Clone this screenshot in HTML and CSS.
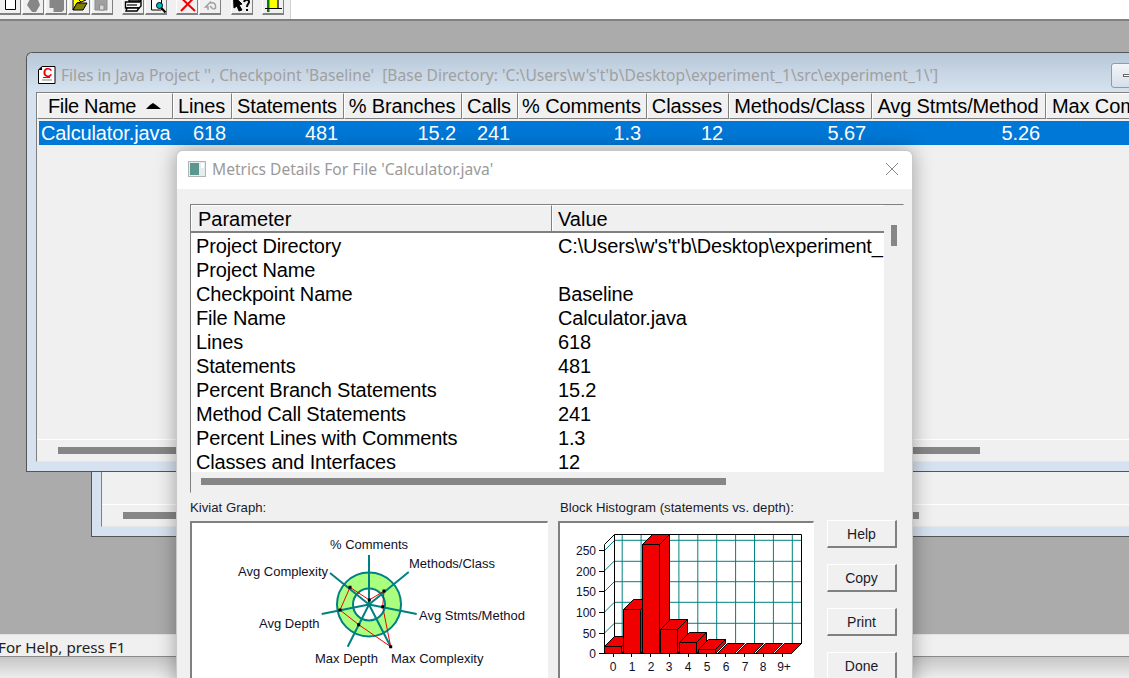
FILE: index.html
```html
<!DOCTYPE html>
<html lang="en">
<head>
<meta charset="utf-8">
<title>SourceMonitor</title>
<link rel="stylesheet" href="styles.css">
</head>
<body>
<div class="app">
  <header class="topbar">
    <div class="toolbar">
      <div class="tbgroup">
        <button class="tb tb-first"><svg class="ico" viewBox="0 0 22 22"><path class="i-doc" d="M6.500 0.500h7l3 3v13h-10z"/></svg></button>
        <button class="tb"><svg class="ico" viewBox="0 0 22 22"><path class="i-dis" d="M5 12L9 4h6l3 8-4 7h-4z"/></svg></button>
        <button class="tb"><svg class="ico" viewBox="0 0 22 22"><path class="i-dis" d="M4.500 0H17l2 3v14l-2 2H8.500v-4h-4z"/></svg></button>
        <button class="tb"><svg class="ico" viewBox="0 0 22 22"><path class="i-folder" d="M5 17V6h5l3 3-4 1z"/><path class="i-folder" d="M11 7l5-3 2 3-5 2z"/><path class="i-folder2" d="M5 17l4-7h10l-4 7z"/></svg></button>
        <button class="tb"><svg class="ico" viewBox="0 0 22 22"><path class="i-save" d="M4 2h12v15H4z"/><path class="i-savein" d="M8.500 12h4.500v5H8.500z"/></svg></button>
      </div>
      <div class="tbgroup">
        <button class="tb"><svg class="ico" viewBox="0 0 22 22"><path class="i-print" d="M7 3h10v5H7z"/><path class="i-print" d="M3.500 9h14l1.500-2v6l-2 2H3.500z"/><path class="i-bk" d="M5 12h10"/><path class="i-print" d="M5 15h12l-2 3H4z"/></svg></button>
        <button class="tb"><svg class="ico" viewBox="0 0 22 22"><path class="i-doc" d="M6.500 1.500h10v15.500h-10z"/><circle class="i-lens" cx="14.500" cy="12.500" r="3"/><path class="i-hd" d="M16.500 15l4 4.500"/></svg></button>
      </div>
      <div class="tbgroup">
        <button class="tb"><svg class="ico" viewBox="0 0 22 22"><path class="i-x" d="M5 18L17.700 5M19 18L5.300 5"/></svg></button>
        <button class="tb"><svg class="ico" viewBox="0 0 22 22"><path class="i-undo" d="M9 17v-3H6.500l5-5 1 1a3 3 0 0 1 4 3v2l-2 1.500M11 13l3 3"/></svg></button>
      </div>
      <div class="tbgroup tbgroup-wide">
        <button class="tb"><svg class="ico" viewBox="0 0 22 22"><path class="i-cur" d="M2.500 3L11 11l-3 1 3 5-3 1-2-5-3 2z"/><path class="i-q" d="M13 9c1-3 5-3 5 0 0 2-2 2-2 5M16 16v2"/></svg></button>
      </div>
      <div class="tbgroup">
        <button class="tb"><svg class="ico" viewBox="0 0 22 22"><path class="i-door" d="M8 2h7.500v13H8z"/><path class="i-green" d="M5 2h2.500v17H5z"/><path class="i-bk" d="M3 15.500h17M16 2v13"/></svg></button>
      </div>
    </div>
    <div class="topfill"></div>
  </header>

  <main class="desktop">
    <section class="mdi mdi-back">
      <div class="mdi-inner">
        <div class="mdi-scrollzone"><div class="hthumb hthumb-back"></div></div>
      </div>
    </section>

    <section class="mdi mdi-front">
      <div class="mdi-title">
        <svg class="cicon" viewBox="0 0 20 20"><path class="c-page" d="M5 1.500h13v17H1.500V5z"/><path class="c-corner" d="M1.500 5L5 1.500V5z"/><text class="c-letter" x="6" y="12">C</text><path class="c-red" d="M6 12.500h7"/><path class="c-line" d="M5 15h10"/></svg>
        <span class="mdi-caption">Files in Java Project '', Checkpoint 'Baseline'&nbsp; [Base Directory: 'C:\Users\w's't'b\Desktop\experiment_1\src\experiment_1\']</span>
        <div class="minbtn"><span class="mindash"></span></div>
      </div>
      <div class="mdi-inner">
        <div class="cols head">
          <div class="hc hc-name">File Name <svg class="sortup" viewBox="0 0 15 6"><path d="M0 6 L4 2 L7 0 L10 2 L15 6z"/></svg></div>
          <div class="hc">Lines</div>
          <div class="hc">Statements</div>
          <div class="hc">% Branches</div>
          <div class="hc">Calls</div>
          <div class="hc">% Comments</div>
          <div class="hc">Classes</div>
          <div class="hc">Methods/Class</div>
          <div class="hc">Avg Stmts/Method</div>
          <div class="hc hc-last">Max Com</div>
        </div>
        <div class="cols selrow">
          <div class="rc rc-name">Calculator.java</div>
          <div class="rc">618</div>
          <div class="rc">481</div>
          <div class="rc">15.2</div>
          <div class="rc rc-calls">241</div>
          <div class="rc">1.3</div>
          <div class="rc">12</div>
          <div class="rc">5.67</div>
          <div class="rc">5.26</div>
          <div class="rc"></div>
        </div>
        <div class="mdi-empty"></div>
        <div class="mdi-scrollzone"><div class="hthumb hthumb-front"></div></div>
      </div>
    </section>

    <section class="dialog">
      <div class="dlg-title">
        <svg class="dlg-icon" viewBox="0 0 18 16"><rect class="d-frame" x="0.500" y="0.500" width="17" height="15"/><rect class="d-teal" x="2" y="2" width="9" height="12"/><rect class="d-side" x="13" y="2" width="3" height="5"/></svg>
        <span class="dlg-caption">Metrics Details For File 'Calculator.java'</span>
        <svg class="dlg-close" viewBox="0 0 14 14"><path d="M1 1l12 12M13 1L1 13"/></svg>
      </div>
      <div class="dlg-body">
        <div class="listbox">
          <div class="listmain">
            <div class="lhead">
              <div class="lh lh-1">Parameter</div>
              <div class="lh lh-2">Value</div>
            </div>
            <div class="lrows">
              <div class="lrow"><span class="lk">Project Directory</span><span class="lv">C:\Users\w's't'b\Desktop\experiment_</span></div>
              <div class="lrow"><span class="lk">Project Name</span><span class="lv"></span></div>
              <div class="lrow"><span class="lk">Checkpoint Name</span><span class="lv">Baseline</span></div>
              <div class="lrow"><span class="lk">File Name</span><span class="lv">Calculator.java</span></div>
              <div class="lrow"><span class="lk">Lines</span><span class="lv">618</span></div>
              <div class="lrow"><span class="lk">Statements</span><span class="lv">481</span></div>
              <div class="lrow"><span class="lk">Percent Branch Statements</span><span class="lv">15.2</span></div>
              <div class="lrow"><span class="lk">Method Call Statements</span><span class="lv">241</span></div>
              <div class="lrow"><span class="lk">Percent Lines with Comments</span><span class="lv">1.3</span></div>
              <div class="lrow"><span class="lk">Classes and Interfaces</span><span class="lv">12</span></div>
            </div>
          </div>
          <div class="vscroll"><div class="vthumb"></div></div>
          <div class="lscroll"><div class="lthumb"></div></div>
        </div>

        <div class="lower">
          <div class="panel panel-kiviat">
            <div class="plabel">Kiviat Graph:</div>
            <div class="pbox pbox-k">
              <svg class="chart" viewBox="192 523 356 157">
                <circle class="k-band" cx="369" cy="604.500" r="24"/>
                <circle class="k-ring" cx="369" cy="604.500" r="32"/>
                <circle class="k-ring k-inner" cx="369" cy="604.500" r="16"/>
                <path class="k-spoke" d="M369 604.500V555M369 604.500L408.700 572M369 604.500L416.700 614M369 604.500L390.700 646.700M369 604.500L347.700 646.700M369 604.500L321.700 614M369 604.500L330 573"/>
                <path class="k-poly" d="M369.300 600L384 591L382.700 606.700L390.700 646.700L358.700 624.700L340 610L350 587.300z"/>
                <path class="k-dots" d="M369.300 600h.01M384 591h.01M382.700 606.700h.01M390.700 646.700h.01M358.700 624.700h.01M340 610h.01M350 587.300h.01"/>
                <text class="t13" x="330" y="549">% Comments</text>
                <text class="t13" x="409" y="568">Methods/Class</text>
                <text class="t13" x="419" y="620">Avg Stmts/Method</text>
                <text class="t13" x="391" y="663">Max Complexity</text>
                <text class="t13" x="315" y="663">Max Depth</text>
                <text class="t13" x="259" y="628">Avg Depth</text>
                <text class="t13" x="238" y="576">Avg Complexity</text>
              </svg>
            </div>
          </div>
          <div class="panel panel-hist">
            <div class="plabel">Block Histogram (statements vs. depth):</div>
            <div class="pbox pbox-h">
              <svg class="chart" viewBox="560 523 254 156">
                <path class="g-diag" d="M604.300 633.300l10-10M604.300 612.300l10-10M604.300 591.700l10-10M604.300 571l10-10M604.300 550.700l10-10"/>
                <path class="g-teal" d="M614.300 540.300H801.700M614.300 561.300H801.700M614.300 581.700H801.700M614.300 602.300H801.700M614.300 623.300H801.700M622.200 534.300V643.300M641.100 534.300V643.300M660 534.300V643.300M678.900 534.300V643.300M697.800 534.300V643.300M716.700 534.300V643.300M735.600 534.300V643.300M754.500 534.300V643.300M773.400 534.300V643.300M792.300 534.300V643.300"/>
                <path class="g-frame" d="M604.500 653.500V544.500L614.500 534.500H801.500V643.500L791.500 653.500M614.500 534.500V643.500"/>
                <path class="g-frame" d="M599 653.500H791.500M599 633.500h5M599 612.500h5M599 591.500h5M599 571.500h5M599 550.500h5M613.500 653v4M631.500 653v4M650.500 653v4M669.500 653v4M688.500 653v4M706.500 653v4M725.500 653v4M744.500 653v4M763.500 653v4M782.500 653v4"/>
                <g class="g-bars">
                  <path d="M604.500 646.500h17v7h-17zM604.500 646.500l10-10h17l-10 10zM621.500 646.500l10-10v7l-10 10z"/>
                  <path d="M623.500 609.500h17v44h-17zM623.500 609.500l10-10h17l-10 10zM640.500 609.500l10-10v44l-10 10z"/>
                  <path d="M642.500 544.500h17v109h-17zM642.500 544.500l10-10h17l-10 10zM659.500 544.500l10-10v109l-10 10z"/>
                  <path d="M660.500 629.500h17v24h-17zM660.500 629.500l10-10h17l-10 10zM677.500 629.500l10-10v24l-10 10z"/>
                  <path d="M679.500 642.500h17v11h-17zM679.500 642.500l10-10h17l-10 10zM696.500 642.500l10-10v11l-10 10z"/>
                  <path d="M698.500 649.500h17v4h-17zM698.500 649.500l10-10h17l-10 10zM715.500 649.500l10-10v4l-10 10z"/>
                  <path d="M717.500 653.500l10-10h17l-10 10zM736.500 653.500l10-10h17l-10 10zM755.500 653.500l10-10h17l-10 10zM774.500 653.500l10-10h17l-10 10z"/>
                </g>
                <text class="t12 end" x="596" y="555">250</text>
                <text class="t12 end" x="596" y="576">200</text>
                <text class="t12 end" x="596" y="596">150</text>
                <text class="t12 end" x="596" y="617">100</text>
                <text class="t12 end" x="596" y="638">50</text>
                <text class="t12 end" x="596" y="658">0</text>
                <text class="t12 mid" x="613" y="671">0</text>
                <text class="t12 mid" x="632" y="671">1</text>
                <text class="t12 mid" x="651" y="671">2</text>
                <text class="t12 mid" x="669" y="671">3</text>
                <text class="t12 mid" x="688" y="671">4</text>
                <text class="t12 mid" x="707" y="671">5</text>
                <text class="t12 mid" x="726" y="671">6</text>
                <text class="t12 mid" x="745" y="671">7</text>
                <text class="t12 mid" x="763" y="671">8</text>
                <text class="t12 mid" x="784" y="671">9+</text>
              </svg>
            </div>
          </div>
          <div class="actions">
            <button class="dbtn">Help</button>
            <button class="dbtn">Copy</button>
            <button class="dbtn">Print</button>
            <button class="dbtn">Done</button>
          </div>
        </div>
      </div>
    </section>
  </main>

  <footer class="statusbar"><span class="statustext">For Help, press F1</span></footer>
  <div class="taskstrip"></div>
</div>
</body>
</html>
```

FILE: styles.css
```css
* { box-sizing: border-box; }
html, body { margin: 0; padding: 0; height: 100%; overflow: hidden; }
body { font-family: "Liberation Sans", Arial, sans-serif; color: #000; background: #ababab; }

.app { width: 1129px; height: 678px; display: flex; flex-direction: column; overflow: hidden; }

/* top toolbar */
.topbar { height: 21px; flex: none; display: flex; background: #f0f0f0; border-bottom: 2px solid #808080; }
.toolbar { width: 291px; height: 19px; flex: none; display: flex; align-items: flex-end; gap: 9px; padding-bottom: 4px; border-right: 1px solid #d0d0d0; overflow: hidden; }
.topfill { flex: 1; height: 19px; background: #fff; }
.tbgroup { display: flex; gap: 1px; align-items: flex-end; }
.tbgroup-wide { margin-left: 1px; }
.tb { width: 22px; height: 22px; flex: none; padding: 0; margin: 0; background: #f0f0f0; border: 1px solid #fff; border-right-color: #808080; border-bottom: 2px solid #808080; display: block; }
.tb-first { margin-left: -1px; }
.ico { display: block; width: 22px; height: 22px; margin: -1px 0 0 -1px; overflow: visible; }
.i-doc { fill: #fff; stroke: #000; stroke-width: 1; }
.i-dis { fill: #868686; }
.i-folder { fill: #ffff00; stroke: #000; stroke-width: 1; }
.i-folder2 { fill: #808000; stroke: #000; stroke-width: 1; }
.i-save { fill: #a0a0a0; stroke: #8c8c8c; }
.i-savein { fill: #d8d8d8; stroke: #8c8c8c; }
.i-print { fill: #fff; stroke: #000; stroke-width: 1.4; }
.i-lens { fill: #00b8c0; stroke: #000; stroke-width: 1; }
.i-hd { fill: none; stroke: #000; stroke-width: 2; }
.i-bk { fill: none; stroke: #000; stroke-width: 1.2; }
.i-x { fill: none; stroke: #f00000; stroke-width: 2; }
.i-undo { fill: none; stroke: #a0a0a0; stroke-width: 1.5; }
.i-cur { fill: #000; stroke: #000; stroke-width: 1; }
.i-q { fill: none; stroke: #000; stroke-width: 2; }
.i-door { fill: #ffff00; }
.i-green { fill: #008000; }

/* desktop with free-floating windows */
.desktop { flex: 1; min-height: 0; position: relative; background: #ababab; }

.mdi { position: absolute; border: 1px solid #555; border-top-left-radius: 6px; display: flex; flex-direction: column; }
.mdi-back { left: 91px; top: 200px; width: 1038px; height: 316px; border-right: 0; background: #d6e2ef; padding: 0 0 9px 9px; }
.mdi-front { left: 26px; top: 31px; width: 1103px; height: 420px; border-right: 0; background: #d6e2ef; padding: 0 0 9px 9px; }
.mdi-title { height: 39px; flex: none; margin-left: -9px; padding-left: 10px; display: flex; align-items: center; position: relative; background: linear-gradient(#b8c8d9, #d6e2ef); border-top-left-radius: 6px; }
.cicon { width: 20px; height: 20px; flex: none; margin-top: 5px; }
.c-page { fill: #fff; stroke: #000; }
.c-corner { fill: #000; }
.c-letter { font: bold 13px "Liberation Sans", sans-serif; fill: #f00000; }
.c-red { stroke: #f00000; stroke-width: 1; }
.c-line { stroke: #808080; }
.mdi-caption { margin-left: 4px; margin-top: 5px; font: 15.6px "Noto Sans", sans-serif; color: #a0a0a0; white-space: nowrap; }
.minbtn { position: absolute; left: 1084px; top: 10px; width: 40px; height: 25px; border: 1px solid #8b9bb4; border-radius: 3px; background: linear-gradient(#f4f6f9, #d4dfeb); }
.mindash { display: block; margin: 10px 0 0 11px; width: 8px; height: 3px; background: #fff; border: 1px solid #666; }

.mdi-inner { flex: 1; display: flex; flex-direction: column; background: #f0f0f0; border-left: 1px solid #808080; border-top: 1px solid #808080; border-bottom: 1px solid #e6e6e6; min-height: 0; overflow: hidden; }
.mdi-back .mdi-inner { justify-content: flex-end; border-top: 0; }
.cols { display: grid; grid-template-columns: 136px 59px 112px 118px 56px 129px 82px 143px 174px 120px; }
.head { height: 27px; flex: none; font-size: 20px; letter-spacing: -0.12px; }
.hc { height: 26px; padding: 0 2px 0 0; line-height: 25px; text-align: center; white-space: nowrap; overflow: hidden; background: #f0f0f0; border: 1px solid #fff; border-right-color: #808080; border-bottom-color: #808080; }
.hc-name { display: flex; align-items: center; padding-left: 10px; white-space: pre; letter-spacing: -0.35px; }
.hc-last { text-align: left; padding-left: 5px; }
.sortup { width: 15px; height: 6px; margin-left: 5px; fill: #000; }
.selrow { height: 24px; flex: none; margin: 1px 0 0 2px; background: #0078d7; color: #fff; font-size: 20px; line-height: 24px; letter-spacing: -0.12px; grid-template-columns: 134px 59px 112px 118px 56px 129px 82px 143px 174px 120px; }
.rc { text-align: right; padding-right: 6px; white-space: nowrap; }
.rc-name { text-align: left; padding-left: 2px; padding-right: 0; }
.rc-calls { padding-right: 8px; }
.mdi-empty { flex: 1; min-height: 0; }
.mdi-scrollzone { height: 22px; flex: none; border-top: 1px solid #fff; padding: 7px 0 0 21px; }
.hthumb { height: 7px; background: #868686; }
.hthumb-front { width: 922px; }
.hthumb-back { width: 796px; }

/* dialog */
.dialog { position: absolute; left: 176px; top: 129px; width: 737px; height: 540px; background: #f0f0f0; border: 1px solid #c8c8c8; border-radius: 7px 7px 0 0; box-shadow: 0 0 20px rgba(0, 0, 0, .35); display: flex; flex-direction: column; overflow: hidden; }
.dlg-title { height: 38px; flex: none; background: #fff; display: flex; align-items: center; padding: 0 13px 2px 11px; }
.dlg-icon { width: 18px; height: 16px; flex: none; }
.d-frame { fill: #e8ecee; stroke: #b4b4b4; }
.d-teal { fill: #5a978e; }
.d-side { fill: #fff; }
.dlg-caption { margin-left: 6px; font: 15.6px "Noto Sans", sans-serif; color: #9a9a9a; flex: 1; }
.dlg-close { width: 14px; height: 14px; fill: none; stroke: #8a8a8a; stroke-width: 1; }

.dlg-body { flex: 1; min-height: 0; padding: 15px 7px 0 13px; display: flex; flex-direction: column; }
.listbox { height: 289px; flex: none; display: grid; grid-template-columns: 693px 22px; grid-template-rows: 267px 21px; border-top: 1px solid #808080; border-left: 1px solid #808080; border-right: 1px solid #e0e0e0; border-bottom: 1px solid #e0e0e0; margin-right: 1px; }
.listmain { background: #fff; overflow: hidden; }
.lhead { display: flex; height: 28px; font-size: 20px; background: #f0f0f0; border-bottom: 2px solid #808080; }
.lh { height: 26px; line-height: 26px; padding-left: 6px; border-top: 1px solid #fff; border-left: 1px solid #fff; }
.lh-1 { width: 361px; border-right: 1px solid #808080; }
.lh-2 { flex: 1; padding-left: 5px; }
.lrows { padding: 1px 0 0 5px; }
.lrow { display: flex; height: 24px; line-height: 24px; font-size: 20px; letter-spacing: -0.16px; white-space: nowrap; }
.lk { width: 362px; flex: none; }
.lv { flex: 1; overflow: hidden; }
.vscroll { background: #f0f0f0; padding: 20px 0 0 7px; }
.vthumb { width: 6px; height: 21px; background: #868686; }
.lscroll { grid-column: 1 / 3; padding: 6px 0 0 10px; background: #f0f0f0; }
.lthumb { width: 525px; height: 7px; background: #868686; }

.lower { display: flex; margin-top: 6px; }
.panel { flex: none; }
.panel-kiviat { width: 370px; }
.panel-hist { width: 267px; }
.plabel { font-size: 13.2px; line-height: 18px; height: 22px; color: #1a1a2a; white-space: nowrap; }
.pbox { background: #fff; border-top: 2px solid #808080; border-left: 2px solid #808080; border-right: 1px solid #fff; height: 160px; overflow: hidden; }
.pbox-k { width: 358px; }
.pbox-h { width: 256px; margin-left: -2px; }
.chart { display: block; overflow: hidden; }
.pbox-k .chart { width: 356px; height: 157px; }
.pbox-h .chart { width: 254px; height: 156px; }
.actions { width: 71px; flex: none; padding-top: 21px; display: flex; flex-direction: column; gap: 16px; }
.dbtn { width: 70px; height: 28px; flex: none; padding: 0; font: 14px "Liberation Sans", sans-serif; color: #1a1a2a; background: #f0f0f0; border: 1px solid #fff; border-right: 2px solid #808080; border-bottom: 2px solid #808080; }

/* svg chart parts */
.t12 { font: 12px "Liberation Sans", sans-serif; fill: #101028; }
.t13 { font: 13px "Liberation Sans", sans-serif; fill: #101028; }
.end { text-anchor: end; }
.mid { text-anchor: middle; }
.k-band { fill: none; stroke: #aaff7f; stroke-width: 16; }
.k-ring { fill: none; stroke: #008080; stroke-width: 2; }
.k-spoke { fill: none; stroke: #008080; stroke-width: 2; }
.k-poly { fill: none; stroke: #f00000; stroke-width: 1; }
.k-dots { fill: none; stroke: #000; stroke-width: 3; stroke-linecap: square; }
.g-teal { fill: none; stroke: #008080; stroke-width: 1; }
.g-diag { fill: none; stroke: #008080; stroke-width: 1; }
.g-frame { fill: none; stroke: #000; stroke-width: 1; }
.g-bars path { fill: #f00000; stroke: #000; stroke-width: 1; }

/* status */
.statusbar { height: 23px; flex: none; background: #f0f0f0; border-top: 1px solid #e2e2e2; border-bottom: 1px solid #8a8a8a; font: 15.2px "Noto Sans", sans-serif; line-height: 24px; color: #222; overflow: hidden; }
.statustext { display: block; margin-left: -2px; }
.taskstrip { height: 21px; flex: none; background: linear-gradient(#c6c6c6, #ececec); }
```
